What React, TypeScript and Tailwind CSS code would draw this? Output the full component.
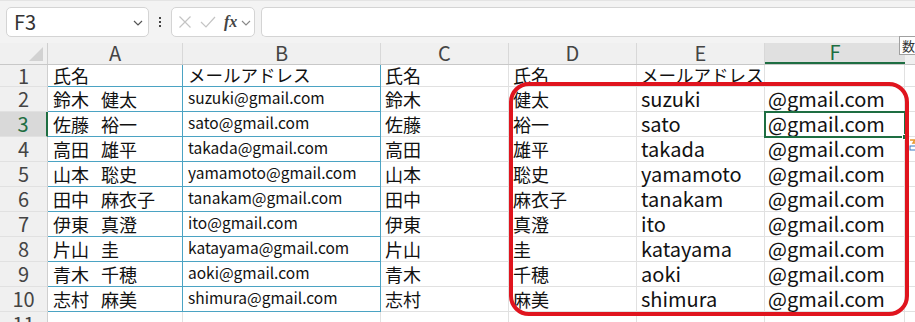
import React from "react";

const FONT = '"Noto Sans CJK JP", "Noto Sans", sans-serif';

const rows: [string, string, string][] = [
  ["鈴木", "健太", "suzuki"],
  ["佐藤", "裕一", "sato"],
  ["高田", "雄平", "takada"],
  ["山本", "聡史", "yamamoto"],
  ["田中", "麻衣子", "tanakam"],
  ["伊東", "真澄", "ito"],
  ["片山", "圭", "katayama"],
  ["青木", "千穂", "aoki"],
  ["志村", "麻美", "shimura"],
];

function RowHead({ n, active }: { n: number; active?: boolean }) {
  return (
    <div
      className={
        "w-[48px] shrink-0 flex items-center justify-center text-[20px] leading-none border-b border-[#e1e1e1] " +
        (active
          ? "bg-[#d9d9d9] text-[#1e6e42] border-r-2 border-r-[#1e6e42]"
          : "bg-[#f0f0f0] text-[#444] border-r border-r-[#cfcfcf]")
      }
    >
      {n}
    </div>
  );
}

export default function App() {
  return (
    <div
      className="relative w-[915px] h-[322px] overflow-hidden bg-white text-[#111]"
      style={{ fontFamily: FONT }}
    >
      {/* formula bar */}
      <div className="h-[43px] bg-[#f3f3f3] border-t border-[#e4e4e4] flex items-start pt-[6px] pl-[6px]">
        <div className="w-[143px] h-[30px] bg-white border border-[#d4d4d4] rounded-[5px] flex items-center justify-between pl-[7px] pr-[5px]">
          <span className="text-[20px] text-[#333] leading-none">F3</span>
          <svg width="10" height="6" viewBox="0 0 10 6" className="mt-[2px]">
            <path d="M1 1 L5 5 L9 1" fill="none" stroke="#555" strokeWidth="1.2" />
          </svg>
        </div>
        <div className="w-[22px] h-[30px] flex flex-col items-center justify-center gap-[2px]">
          <div className="w-[2px] h-[2px] bg-[#444]" />
          <div className="w-[2px] h-[2px] bg-[#444]" />
          <div className="w-[2px] h-[2px] bg-[#444]" />
        </div>
        <div className="w-[84px] h-[30px] bg-white border border-[#d4d4d4] rounded-[5px] flex items-center pl-[5px]">
          <svg width="14" height="14" viewBox="0 0 14 14" className="ml-[1px]">
            <path d="M1.5 1.5 L12.5 12.5 M12.5 1.5 L1.5 12.5" stroke="#c4c4c4" strokeWidth="1.2" />
          </svg>
          <svg width="16" height="14" viewBox="0 0 16 14" className="ml-[8px]">
            <path d="M1 7 L6 12 L15 2" fill="none" stroke="#c4c4c4" strokeWidth="1.2" />
          </svg>
          <span
            className="ml-[8px] text-[16px] italic font-bold text-[#444] leading-none"
            style={{ fontFamily: '"Liberation Serif", serif' }}
          >
            fx
          </span>
          <svg width="10" height="6" viewBox="0 0 10 6" className="ml-[4px] mt-[2px]">
            <path d="M1 1 L5 5 L9 1" fill="none" stroke="#888" strokeWidth="1.1" />
          </svg>
        </div>
        <div className="ml-[6px] flex-1 h-[30px] bg-white border border-[#d4d4d4] rounded-l-[5px] border-r-0" />
      </div>

      {/* column header */}
      <div className="flex h-[22px] bg-[#f0f0f0] border-b border-[#c8c8c8]">
        <div className="w-[48px] shrink-0 relative border-r border-[#cfcfcf]">
          <div className="absolute right-[4px] bottom-[3px] w-0 h-0 border-l-[14px] border-l-transparent border-b-[14px] border-b-[#d2d2d2]" />
        </div>
        {[
          ["A", "w-[135px]"],
          ["B", "w-[198px]"],
          ["C", "w-[128px]"],
          ["D", "w-[128px]"],
          ["E", "w-[128px]"],
        ].map(([l, w]) => (
          <div
            key={l}
            className={w + " shrink-0 flex items-end justify-center text-[20px] leading-none text-[#444] border-r border-[#d8d8d8] pb-[1px]"}
          >
            {l}
          </div>
        ))}
        <div className="w-[140px] shrink-0 flex items-end justify-center text-[20px] leading-none text-[#1e6e42] bg-[#e0e0e0] border-b-2 border-[#1e6e42]">
          F
        </div>
        <div className="flex-1" />
      </div>

      {/* row 1 */}
      <div className="flex h-[22px]">
        <RowHead n={1} />
        <div className="w-[135px] shrink-0 border-r border-b border-[#4ba3c3] pl-[5px] flex items-end text-[18px] leading-[22px] whitespace-nowrap">
          氏名
        </div>
        <div className="w-[198px] shrink-0 border-r border-b border-[#4ba3c3] pl-[5px] flex items-end text-[17.5px] leading-[22px] whitespace-nowrap">
          メールアドレス
        </div>
        <div className="w-[128px] shrink-0 border-r border-b border-[#e1e1e1] pl-[4px] flex items-end text-[18px] leading-[22px] whitespace-nowrap">
          氏名
        </div>
        <div className="w-[128px] shrink-0 border-r border-b border-[#e1e1e1] pl-[4px] flex items-end text-[18px] leading-[22px] whitespace-nowrap">
          氏名
        </div>
        <div className="w-[128px] shrink-0 border-r border-b border-[#e1e1e1] pl-[4px] flex items-end text-[17.5px] leading-[22px] whitespace-nowrap overflow-visible">
          メールアドレス
        </div>
        <div className="w-[140px] shrink-0 border-r border-b border-[#e1e1e1]" />
        <div className="flex-1 border-b border-[#e1e1e1]" />
      </div>

      {rows.map(([last, first, mail], i) => (
        <div key={i} className="flex h-[25px]">
          <RowHead n={i + 2} active={i === 1} />
          <div className="w-[135px] shrink-0 border-r border-b border-[#4ba3c3] pl-[5px] flex items-center text-[18px] leading-none whitespace-nowrap">
            {last}
            <span className="inline-block w-[12px]"> </span>
            {first}
          </div>
          <div className="w-[198px] shrink-0 border-r border-b border-[#4ba3c3] pl-[5px] flex items-center text-[15.5px] leading-none pb-[2px] whitespace-nowrap">
            {mail}@gmail.com
          </div>
          <div className="w-[128px] shrink-0 border-r border-b border-[#e1e1e1] pl-[4px] flex items-center text-[18px] leading-none whitespace-nowrap">
            {last}
          </div>
          <div className="w-[128px] shrink-0 border-r border-b border-[#e1e1e1] pl-[4px] flex items-center text-[18px] leading-none whitespace-nowrap">
            {first}
          </div>
          <div className="w-[128px] shrink-0 border-r border-b border-[#e1e1e1] pl-[4px] flex items-center text-[20px] leading-none whitespace-nowrap">
            {mail}
          </div>
          <div className="w-[140px] shrink-0 border-r border-b border-[#e1e1e1] pl-[3px] flex items-center text-[20px] leading-none whitespace-nowrap">
            @gmail.com
          </div>
          <div className="flex-1 border-b border-[#e1e1e1]" />
        </div>
      ))}

      {/* row 11 */}
      <div className="flex h-[25px]">
        <div className="w-[48px] shrink-0 flex justify-center pt-[2px] text-[20px] leading-none text-[#444] bg-[#f0f0f0] border-r border-[#cfcfcf]">
          11
        </div>
        <div className="w-[135px] shrink-0 border-r border-[#e1e1e1]" />
        <div className="w-[198px] shrink-0 border-r border-[#e1e1e1]" />
        <div className="w-[128px] shrink-0 border-r border-[#e1e1e1]" />
        <div className="w-[128px] shrink-0 border-r border-[#e1e1e1]" />
        <div className="w-[128px] shrink-0 border-r border-[#e1e1e1]" />
        <div className="w-[140px] shrink-0 border-r border-[#e1e1e1]" />
      </div>

      {/* selection F3 */}
      <div className="absolute left-[764px] top-[111px] w-[142px] h-[27px] border-2 border-[#1e6e42]" />
      <div className="absolute left-[902px] top-[134px] w-[6px] h-[6px] bg-[#1e6e42] border border-white" />

      {/* red highlight */}
      <div className="absolute left-[509px] top-[82px] w-[400px] h-[234px] border-4 border-[#e0141e] rounded-[20px]" />

      {/* tooltip */}
      <div className="absolute left-[899px] top-[36px] w-[20px] h-[19px] bg-white border border-[#a0a0a0] flex items-center pl-[2px] text-[13px] leading-none text-[#333]">
        数
      </div>

      {/* quick analysis icon */}
      <svg className="absolute left-[909px] top-[139px]" width="8" height="12" viewBox="0 0 8 12">
        <path d="M1 1 L6 1 L4 4 L7 4" fill="none" stroke="#e8962c" strokeWidth="1.5" />
        <rect x="1" y="7" width="6" height="4" fill="none" stroke="#3a78c2" strokeWidth="1" />
      </svg>
    </div>
  );
}
